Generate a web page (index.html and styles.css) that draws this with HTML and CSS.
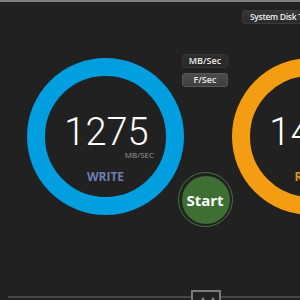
FILE: index.html
```html
<!DOCTYPE html>
<html>
<head>
<meta charset="utf-8">
<link rel="stylesheet" href="styles.css">
</head>
<body>
<div class="app">
  <div class="topline"></div>
  <header class="header">
    <button class="btn sys">System Disk Test</button>
  </header>
  <main class="stage">
    <div class="gauge write">
      <div class="value">1275</div>
      <div class="unit">MB/SEC</div>
      <div class="label">WRITE</div>
    </div>
    <div class="controls">
      <div class="units">
        <button class="btn unitbtn">MB/Sec</button>
        <button class="btn unitbtn active">F/Sec</button>
      </div>
      <button class="start">Start</button>
    </div>
    <div class="gauge read">
      <div class="value">1432</div>
      <div class="unit">MB/SEC</div>
      <div class="label">READ</div>
    </div>
  </main>
  <footer class="footer">
    <div class="toggle">
      <svg width="26" height="10" viewBox="0 0 26 10">
        <path d="M7 10 L10 5 L13 10 Z" fill="#8a8a8a"/>
        <path d="M17 10 L20 5 L23 10 Z" fill="#8a8a8a"/>
      </svg>
    </div>
  </footer>
</div>
</body>
</html>
```
FILE: styles.css
```css
html, body {
  margin: 0;
  padding: 0;
  background: #212121;
}
body {
  width: 300px;
  height: 300px;
  overflow: hidden;
  font-family: "Open Sans", "Liberation Sans", sans-serif;
}
.app {
  display: flex;
  flex-direction: column;
  width: 300px;
  height: 300px;
  overflow: hidden;
}
.topline {
  height: 2px;
  background: #7e7e7e;
  flex-shrink: 0;
}
.header {
  display: flex;
  padding: 8px 0 0 242px;
  height: 14px;
  flex-shrink: 0;
  white-space: nowrap;
}
.btn {
  box-sizing: border-box;
  height: 14px;
  margin: 0;
  padding: 0 8px;
  font-family: "Open Sans", "Liberation Sans", sans-serif;
  font-size: 9px;
  font-weight: 600;
  line-height: 12px;
  color: #ececec;
  border: 1px solid #3b3b3b;
  border-radius: 3px;
  background: linear-gradient(#363636, #2a2a2a);
  flex-shrink: 0;
  text-align: center;
}
.sys {
  padding: 0 8px 0 7px;
  text-align: left;
  font-size: 8.5px;
  letter-spacing: -0.3px;
}
.stage {
  display: flex;
  align-items: flex-start;
  padding-left: 27px;
  height: 266px;
  flex-shrink: 0;
}
.gauge {
  box-sizing: border-box;
  width: 157px;
  height: 157px;
  margin-top: 34px;
  border-radius: 50%;
  border: 18px solid #019ee0;
  flex-shrink: 0;
  display: flex;
  flex-direction: column;
  align-items: center;
  padding-top: 38px;
}
.gauge.read {
  border-color: #f49c12;
  margin-left: -1px;
}
.value {
  font-family: Roboto, "Liberation Sans", sans-serif;
  font-weight: 300;
  font-size: 38px;
  line-height: 36px;
  color: #ffffff;
  margin-left: 2px;
}
.unit {
  align-self: flex-end;
  margin: 0 12px 0 0;
  font-size: 8px;
  line-height: 9px;
  color: #9a9a9a;
}
.label {
  margin-top: 11px;
  font-size: 12px;
  line-height: 14px;
  font-weight: 700;
  color: #6b7eb3;
}
.read .label {
  color: #e0901c;
}
.controls {
  width: 56px;
  margin: 30px 0 0 -7px;
  display: flex;
  flex-direction: column;
  align-items: center;
  flex-shrink: 0;
}
.units {
  display: flex;
  flex-direction: column;
  gap: 5px;
}
.unitbtn {
  width: 46px;
  padding: 0;
  background: linear-gradient(#2e2e2e, #272727);
  border-color: #363636;
}
.unitbtn.active {
  background: linear-gradient(#4c4c4c, #3e3e3e);
  border-color: #555;
}
.start {
  box-sizing: border-box;
  width: 55px;
  height: 55px;
  margin-top: 85px;
  padding: 2.5px;
  border-radius: 50%;
  border: 1.5px solid #3d7c34;
  background: #3d6e32;
  background-clip: content-box;
  color: #ffffff;
  font-family: "Open Sans", "Liberation Sans", sans-serif;
  font-weight: 700;
  font-size: 15px;
  line-height: 20px;
}
.footer {
  display: flex;
  margin: 6px 0 0 8px;
  border-top: 2px solid #464646;
  padding-left: 183px;
  flex-shrink: 0;
}
.toggle {
  box-sizing: border-box;
  width: 30px;
  height: 14px;
  margin-top: -8px;
  border: 2px solid #7a7a7a;
  border-bottom: none;
  background: #222;
  display: flex;
}
.toggle svg {
  display: block;
}
```
